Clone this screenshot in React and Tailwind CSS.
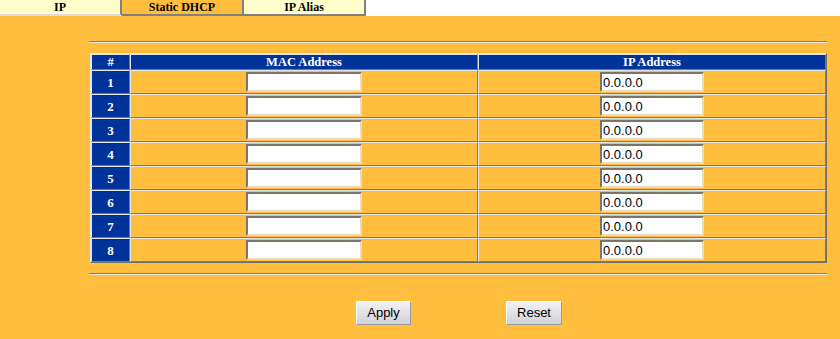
import React from "react";

const tabs = [
  { label: "IP", active: false },
  { label: "Static DHCP", active: true },
  { label: "IP Alias", active: false },
];

const rows = [1, 2, 3, 4, 5, 6, 7, 8];

const cell =
  "border border-t-[#e6e6e6] border-l-[#e6e6e6] border-b-[#7a7a7a] border-r-[#7a7a7a] p-0";

const inputCls =
  "h-[20px] border-2 border-t-[#7c7566] border-l-[#7c7566] border-b-[#e8dcc0] border-r-[#e8dcc0] bg-white px-[1px] text-[13px] leading-none text-black outline-none";

const App = () => {
  return (
    <div className="min-h-[339px] w-[840px] bg-[#FFBE3E] font-['Liberation_Serif',serif]">
      {/* tab bar */}
      <div className="flex h-[16px] bg-white">
        {tabs.map((t, i) => (
          <div
            key={t.label}
            className={`flex h-[16px] w-[122px] items-center justify-center border-r-2 border-b-2 border-r-[#808080] text-[12px] font-bold leading-none text-black ${
              t.active ? "bg-[#FFBE3E] border-b-[#808080]" : "bg-[#FFFFCC]"
            } ${i === 0 ? "border-b-[#dcdcdc]" : "border-b-[#808080]"}`}
          >
            {t.label}
          </div>
        ))}
      </div>

      <div className="pl-[89px] pr-[13px]">
        <div className="mt-[25px] h-[2px] border-t border-b border-t-[#808080] border-b-[#e8e8e8]" />

        {/* static DHCP table */}
        <table className="mt-[10px] ml-[1px] w-[737px] table-fixed border-separate border-spacing-0 border border-t-[#e6e6e6] border-l-[#e6e6e6] border-b-[#6e6e6e] border-r-[#6e6e6e]">
          <colgroup>
            <col className="w-[39px]" />
            <col className="w-[348px]" />
            <col />
          </colgroup>
          <thead>
            <tr className="h-[16px]">
              <th className={`${cell} bg-[#003399] text-[12.5px] font-bold leading-none text-white`}>#</th>
              <th className={`${cell} bg-[#003399] text-[12.5px] font-bold leading-none text-white`}>MAC Address</th>
              <th className={`${cell} bg-[#003399] text-[12.5px] font-bold leading-none text-white`}>IP Address</th>
            </tr>
          </thead>
          <tbody>
            {rows.map((n) => (
              <tr key={n} className="h-[24px]">
                <td className={`${cell} bg-[#003399] text-center text-[13px] font-bold leading-none text-white`}>{n}</td>
                <td className={cell}>
                  <div className="flex justify-center">
                    <input type="text" defaultValue="" className={`${inputCls} w-[116px]`} />
                  </div>
                </td>
                <td className={cell}>
                  <div className="flex justify-center">
                    <input
                      type="text"
                      defaultValue="0.0.0.0"
                      className={`${inputCls} w-[104px] font-['Liberation_Sans',sans-serif]`}
                    />
                  </div>
                </td>
              </tr>
            ))}
          </tbody>
        </table>

        <div className="mt-[10px] h-[2px] border-t border-b border-t-[#808080] border-b-[#e8e8e8]" />

        {/* buttons */}
        <div className="mt-[26px] flex justify-center gap-[95px] pl-[2px]">
          <button className="h-[24px] w-[55px] border border-t-white border-l-white border-b-[#9a9aa4] border-r-[#9a9aa4] bg-gradient-to-b from-[#f2f2f4] to-[#d2d2da] font-['Liberation_Sans',sans-serif] text-[13px] text-black">
            Apply
          </button>
          <button className="h-[24px] w-[56px] border border-t-white border-l-white border-b-[#9a9aa4] border-r-[#9a9aa4] bg-gradient-to-b from-[#f2f2f4] to-[#d2d2da] font-['Liberation_Sans',sans-serif] text-[13px] text-black">
            Reset
          </button>
        </div>
      </div>
    </div>
  );
};

export default App;
